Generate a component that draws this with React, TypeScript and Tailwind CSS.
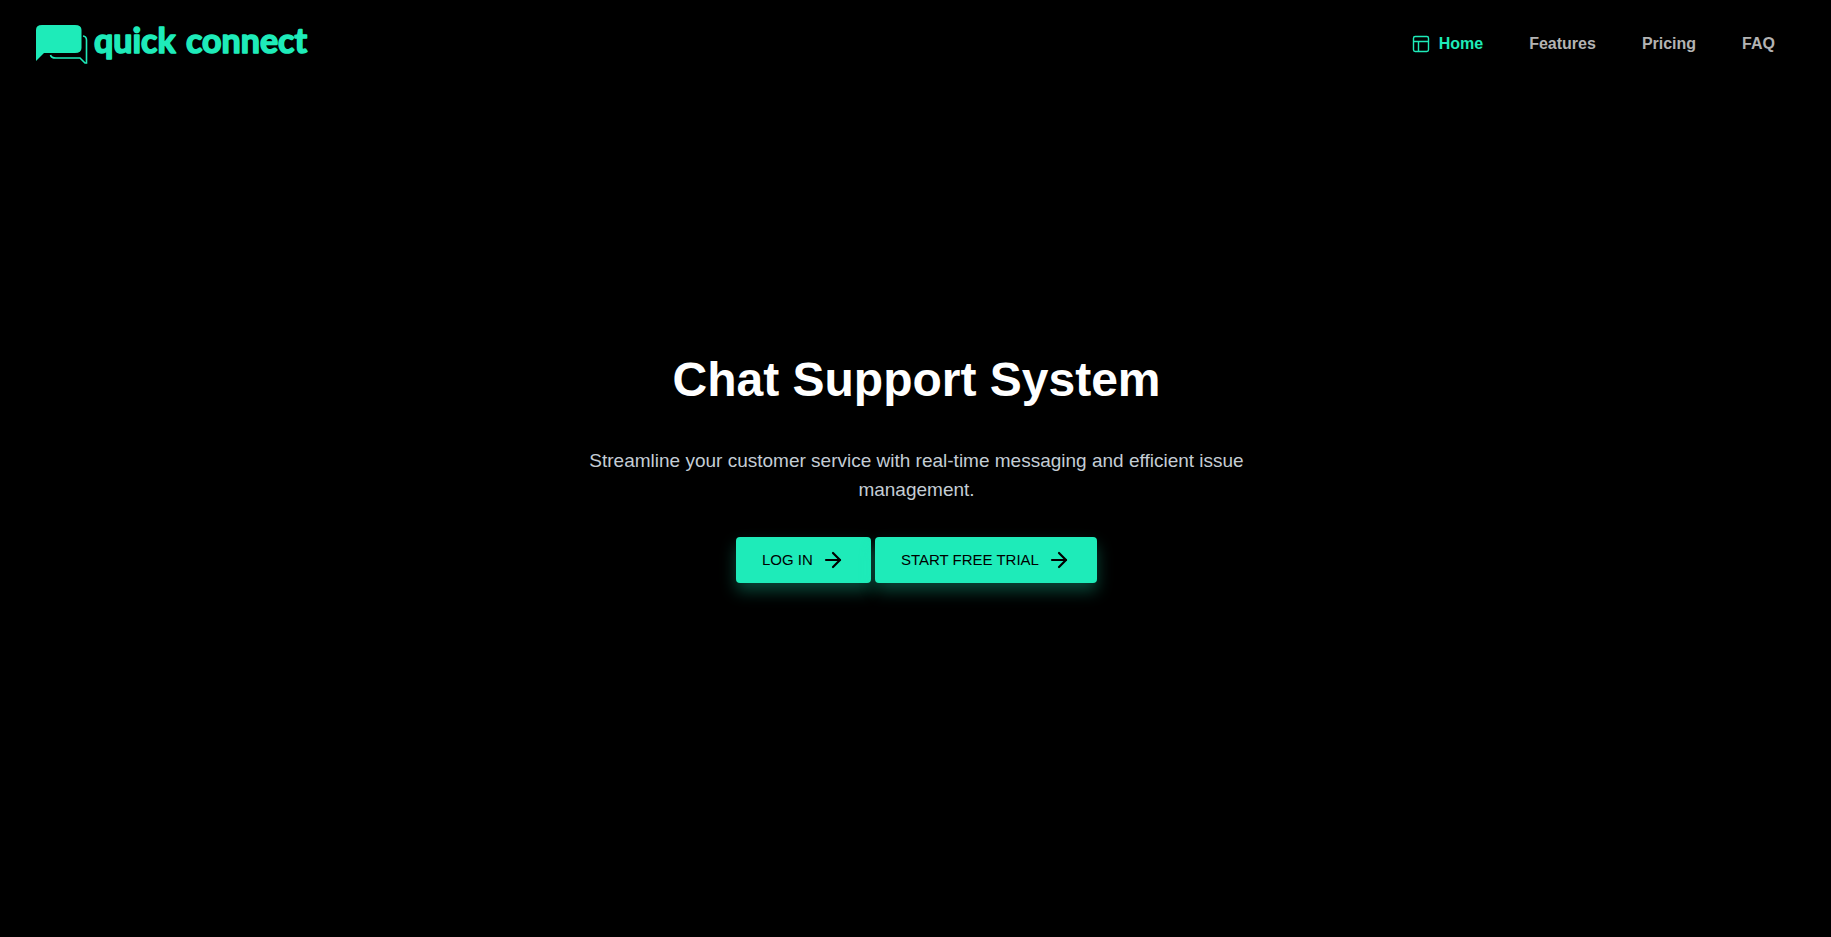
import { ArrowRight } from "lucide-react";

const links = ["Features", "Pricing", "FAQ"];

function Logo() {
  return (
    <a href="#home" aria-label="quick connect" className="block text-[#1eebb9]">
      <svg width="274" height="48" viewBox="0 0 274 48" fill="none" aria-hidden="true">
        <path
          d="M6 5H39Q45.5 5 45.5 10V28Q45.5 33 39 33H8L0 41V10Q0 5 6 5Z"
          fill="currentColor"
        />
        <path
          d="M47 16Q50.5 16.5 50.5 20V43H49L44 38H20Q15 38 14.5 35"
          stroke="currentColor"
          strokeWidth="1.6"
        />
        <g
          fill="currentColor"
          stroke="currentColor"
          strokeWidth="1.6"
          strokeLinejoin="round"
          fontFamily="Lato, sans-serif"
          fontWeight="700"
          fontSize="34"
        >
          <text x="58" y="33">
            quick
          </text>
          <text x="150" y="33">
            connect
          </text>
        </g>
      </svg>
    </a>
  );
}

function HeroButton({ label }: { label: string }) {
  return (
    <button
      type="button"
      className="flex h-[46px] items-center gap-2 rounded bg-[#1eebb9] px-[26px] text-[15px] text-black shadow-[0_8px_16px_rgba(30,235,185,0.3)]"
    >
      {label}
      <ArrowRight size={24} strokeWidth={2.2} aria-hidden="true" />
    </button>
  );
}

export default function App() {
  return (
    <div className="flex min-h-screen flex-col bg-black font-['Liberation_Sans',Arial,sans-serif]">
      <header className="flex h-[88px] items-center justify-between pr-14 pl-9">
        <Logo />
        <nav className="flex items-center gap-[46px] text-base font-bold text-[#b3b3b3]">
          <a href="#home" className="flex items-center gap-2 text-[#1eebb9]">
            <svg width="20" height="20" viewBox="0 0 24 24" fill="none" stroke="currentColor" strokeWidth="1.7" strokeLinejoin="round" aria-hidden="true">
              <rect x="3" y="3" width="18" height="18" rx="2" />
              <path d="M3 9H21M9 21V9" />
            </svg>
            Home
          </a>
          {links.map((link) => (
            <a key={link} href={`#${link.toLowerCase()}`}>
              {link}
            </a>
          ))}
        </nav>
      </header>
      <main className="flex flex-1 flex-col items-center justify-center pb-[86px] pl-0.5 text-center">
        <h1 className="text-5xl font-bold text-white">Chat Support System</h1>
        <p className="mt-[42px] max-w-[700px] text-[19px] leading-[29px] text-[#c4cdd5]">
          Streamline your customer service with real-time messaging and efficient issue management.
        </p>
        <div className="mt-[33px] flex gap-1">
          <HeroButton label="LOG IN" />
          <HeroButton label="START FREE TRIAL" />
        </div>
      </main>
    </div>
  );
}
